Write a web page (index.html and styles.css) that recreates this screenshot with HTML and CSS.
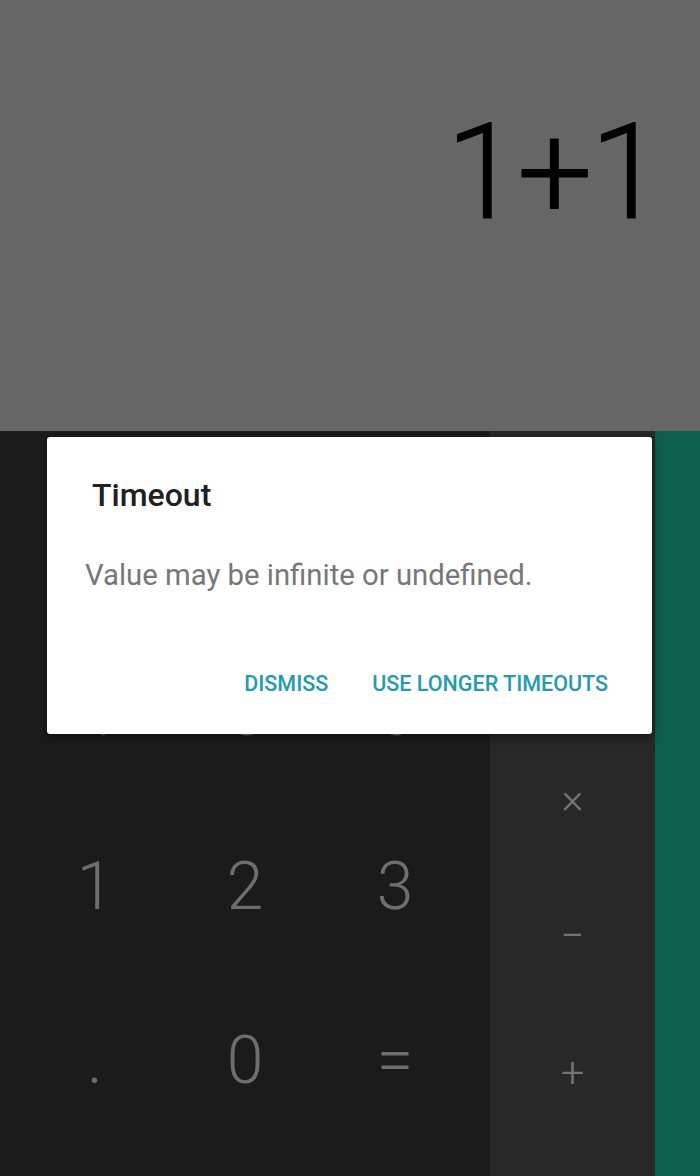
FILE: index.html
```html
<!DOCTYPE html>
<html>
<head>
<meta charset="utf-8">
<link rel="stylesheet" href="styles.css">
</head>
<body>
<div class="screen">
  <div class="display">
    <div class="formula">1+1</div>
  </div>
  <div class="pad">
    <div class="digits">
      <span class="key"></span><span class="key"></span><span class="key"></span>
      <span class="key">4</span><span class="key">5</span><span class="key">6</span>
      <span class="key">1</span><span class="key">2</span><span class="key">3</span>
      <span class="key">.</span><span class="key">0</span><span class="key">=</span>
    </div>
    <div class="ops">
      <span class="op"></span>
      <span class="op"></span>
      <span class="op">×</span>
      <span class="op">−</span>
      <span class="op">+</span>
    </div>
    <div class="advanced"></div>
  </div>
  <div class="dialog">
    <div class="dialog-title">Timeout</div>
    <div class="dialog-body">Value may be infinite or undefined.</div>
    <div class="dialog-actions">
      <span class="btn">DISMISS</span>
      <span class="btn">USE LONGER TIMEOUTS</span>
    </div>
  </div>
</div>
</body>
</html>
```

FILE: styles.css
```css
html, body {
  margin: 0;
  padding: 0;
  background: #1b1b1b;
}
.screen {
  position: relative;
  width: 700px;
  height: 1176px;
  overflow: hidden;
  font-family: Roboto, "Noto Sans", sans-serif;
}
.display {
  height: 431px;
  background: #666666;
  display: flex;
  justify-content: flex-end;
  box-sizing: border-box;
  padding: 106px 39px 0 0;
}
.formula {
  font-size: 134px;
  font-weight: 300;
  color: #000;
  line-height: 134px;
  height: 134px;
  letter-spacing: -3px;
  -webkit-text-stroke: 1px #000;
}
.pad {
  display: flex;
  height: 745px;
}
.digits {
  width: 490px;
  background: #1b1b1b;
  box-sizing: border-box;
  padding: 20px 0 0 20px;
  display: grid;
  grid-template-columns: repeat(3, 150px);
  grid-auto-rows: 174px;
  align-content: start;
}
.key {
  display: flex;
  align-items: center;
  justify-content: center;
  font-size: 66px;
  font-weight: 300;
  color: #6e6e6e;
}
.ops {
  width: 165px;
  background: #282828;
  box-sizing: border-box;
  padding-top: 25px;
  display: grid;
  grid-auto-rows: 137px;
  align-content: start;
}
.op {
  display: flex;
  align-items: center;
  justify-content: center;
  font-size: 42px;
  font-weight: 300;
  color: #747474;
}
.advanced {
  flex: 1;
  background: #0c5f49;
}
.dialog {
  position: absolute;
  left: 47px;
  top: 437px;
  width: 605px;
  height: 297px;
  background: #ffffff;
  border-radius: 3px;
  box-shadow: 0 4px 10px rgba(0,0,0,0.45);
  box-sizing: border-box;
  display: flex;
  flex-direction: column;
}
.dialog-title {
  font-size: 32px;
  font-weight: 500;
  color: #212121;
  padding: 42px 0 0 45px;
  line-height: 32px;
}
.dialog-body {
  font-size: 29.3px;
  color: #777777;
  padding: 50px 0 0 38px;
  line-height: 29px;
}
.dialog-actions {
  display: flex;
  justify-content: flex-end;
  gap: 44px;
  padding: 83px 44px 0 0;
}
.btn {
  font-size: 21.5px;
  font-weight: 500;
  color: #229cae;
  line-height: 22px;
}
```
